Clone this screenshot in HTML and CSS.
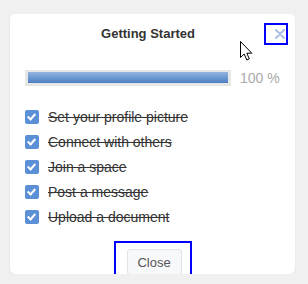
FILE: index.html
```html
<!DOCTYPE html>
<html lang="en">
<head>
    <meta charset="UTF-8">
    <title>Getting Started</title>
    <link rel="stylesheet" href="styles.css">
</head>
<body>
    <div class="card">
        <div class="card-header">
            <h1>Getting Started</h1>
            <button class="dismiss" aria-label="Close">
                <svg width="10" height="10" viewBox="0 0 10 10"><path d="M1 1 L9 9 M9 1 L1 9" stroke="#a9c1e2" stroke-width="2" stroke-linecap="round"/></svg>
            </button>
        </div>

        <div class="progress-row">
            <div class="progress-track"><div class="progress-bar" style="width: 100%;"></div></div>
            <span class="progress-label">100 %</span>
        </div>

        <ul class="checklist">
            <li><span class="check"></span>Set your profile picture</li>
            <li><span class="check"></span>Connect with others</li>
            <li><span class="check"></span>Join a space</li>
            <li><span class="check"></span>Post a message</li>
            <li><span class="check"></span>Upload a document</li>
        </ul>

        <div class="card-footer">
            <div class="focus-box">
                <button class="btn-close">Close</button>
            </div>
        </div>
    </div>

    <!-- mouse pointer -->
    <svg class="cursor" width="14" height="21" viewBox="0 0 14 21">
        <path d="M0.5 0.5 L0.5 16.5 L4.2 13 L6.8 19 L9.3 17.9 L6.8 12.2 L11.8 12.2 Z" fill="#fff" stroke="#000" stroke-width="1"/>
    </svg>
</body>
</html>
```

FILE: styles.css
```css
* { box-sizing: border-box; margin: 0; padding: 0; }
body { font-family: "Liberation Sans", Arial, sans-serif; background: #f0f0f0; padding: 14px 13px 0 10px; }
.card { position: relative; width: 285px; height: 260px; background: #fff; border-radius: 5px; box-shadow: 0 1px 2px rgba(0,0,0,0.08); padding: 9px 7px 0 15px; }
.card-header { display: flex; align-items: center; height: 22px; }
.card-header h1 { flex: 1; text-align: center; font-size: 13px; font-weight: bold; color: #333; padding-left: 7px; line-height: 22px; }
.dismiss { width: 24px; height: 22px; border: 2px solid #0000ff; background: none; display: flex; align-items: center; justify-content: flex-end; padding: 0 1px 1px 0; }
.dismiss svg { display: block; }
.progress-row { display: flex; align-items: center; gap: 9px; margin-top: 25px; }
.progress-track { width: 206px; height: 16px; background: #e6e6e6; padding: 2px 3px 3px; }
.progress-bar { height: 11px; background: linear-gradient(#93b5e0, #4b7fc1); }
.progress-label { font-size: 14px; color: #aaa; line-height: 16px; }
.checklist { list-style: none; margin-top: 18px; }
.checklist li { display: flex; align-items: center; gap: 9px; height: 25px; font-size: 14px; color: #333; text-decoration: line-through; }
.check { width: 14px; height: 14px; border-radius: 2px; background: #5b8fd6; position: relative; flex-shrink: 0; }
.check::after { content: ""; position: absolute; left: 4px; top: 2px; width: 3px; height: 6px; border: solid #fff; border-width: 0 2.5px 2.5px 0; transform: rotate(42deg); }
.card-footer { display: flex; justify-content: center; margin-top: 12px; margin-left: -8px; }
.focus-box { border: 2px solid #0000ff; padding: 6px 8px 2px 11px; }
.btn-close { display: block; width: 55px; height: 26px; border: 1px solid #dfe4ea; border-radius: 3px; background: #f7f8fa; font-family: "Liberation Sans", Arial, sans-serif; font-size: 13px; color: #555; }
.cursor { position: absolute; left: 240px; top: 41px; }
```
